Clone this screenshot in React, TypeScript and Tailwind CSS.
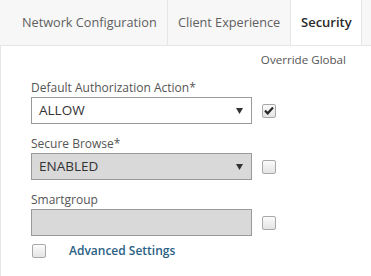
import React from "react";

function Box({ checked = false }: { checked?: boolean }) {
  return (
    <div className="w-[14px] h-[14px] rounded-[2px] border border-[#a8a8a8] bg-gradient-to-b from-[#fbfbfb] to-[#e4e4e4] flex items-center justify-center shrink-0">
      {checked && (
        <svg width="10" height="9" viewBox="0 0 10 9">
          <path d="M1 4.6 L3.7 7.3 L9 1.4" fill="none" stroke="#2a2a2a" strokeWidth="2.2" />
        </svg>
      )}
    </div>
  );
}

function Arrow() {
  return (
    <svg width="7" height="6" viewBox="0 0 7 6" className="shrink-0">
      <path d="M0 0 H7 L3.5 6 Z" fill="#333" />
    </svg>
  );
}

export default function App() {
  const font = { fontFamily: '"Open Sans", "Noto Sans", sans-serif' };
  return (
    <div className="w-[371px] h-[276px] bg-white overflow-hidden text-[12px]" style={font}>
      <div className="flex h-[46px] bg-[#f7f7f7] border-b border-[#e6e6e6] text-[12.7px]">
        <div className="flex items-center pl-[22px] pr-[10px] border-r border-[#e6e6e6] text-[#606060] whitespace-nowrap w-[168px]">
          Network Configuration
        </div>
        <div className="flex items-center px-[10px] border-r border-[#e6e6e6] text-[#606060] whitespace-nowrap w-[123px]">
          Client Experience
        </div>
        <div className="flex items-center px-[10px] bg-white border-r border-[#e6e6e6] text-[#2a2a2a] font-semibold whitespace-nowrap w-[71px] text-[13px]">
          Security
        </div>
      </div>
      <div className="border-l border-[#e6e6e6] pl-[30px] pt-[4px] h-[230px]">
        <div className="flex justify-end pr-[25px] h-[20px] items-center text-[11.6px] text-[#555]">
          Override Global
        </div>
        <div className="mt-[9px] h-[18px] flex items-center text-[#555]">Default Authorization Action*</div>
        <div className="flex items-center gap-[10px]">
          <div className="w-[221px] h-[27px] border border-[#9a9a9a] bg-white flex items-center justify-between pl-[7px] pr-[8px] text-[#333] text-[13.5px]">
            <span>ALLOW</span>
            <Arrow />
          </div>
          <Box checked />
        </div>
        <div className="mt-[11px] h-[18px] flex items-center text-[#555]">Secure Browse*</div>
        <div className="flex items-center gap-[10px]">
          <div className="w-[221px] h-[27px] border border-[#9a9a9a] bg-[#d9d9d9] flex items-center justify-between pl-[7px] pr-[8px] text-[#333] text-[13.5px]">
            <span>ENABLED</span>
            <Arrow />
          </div>
          <Box />
        </div>
        <div className="mt-[11px] h-[18px] flex items-center text-[#555]">Smartgroup</div>
        <div className="flex items-center gap-[10px]">
          <div className="w-[221px] h-[27px] border border-[#9a9a9a] bg-[#d9d9d9]" />
          <Box />
        </div>
        <div className="mt-[7px] h-[16px] flex items-center pl-[1px]">
          <Box />
          <span className="ml-[23px] font-semibold text-[#2b6184]">Advanced Settings</span>
        </div>
      </div>
    </div>
  );
}
